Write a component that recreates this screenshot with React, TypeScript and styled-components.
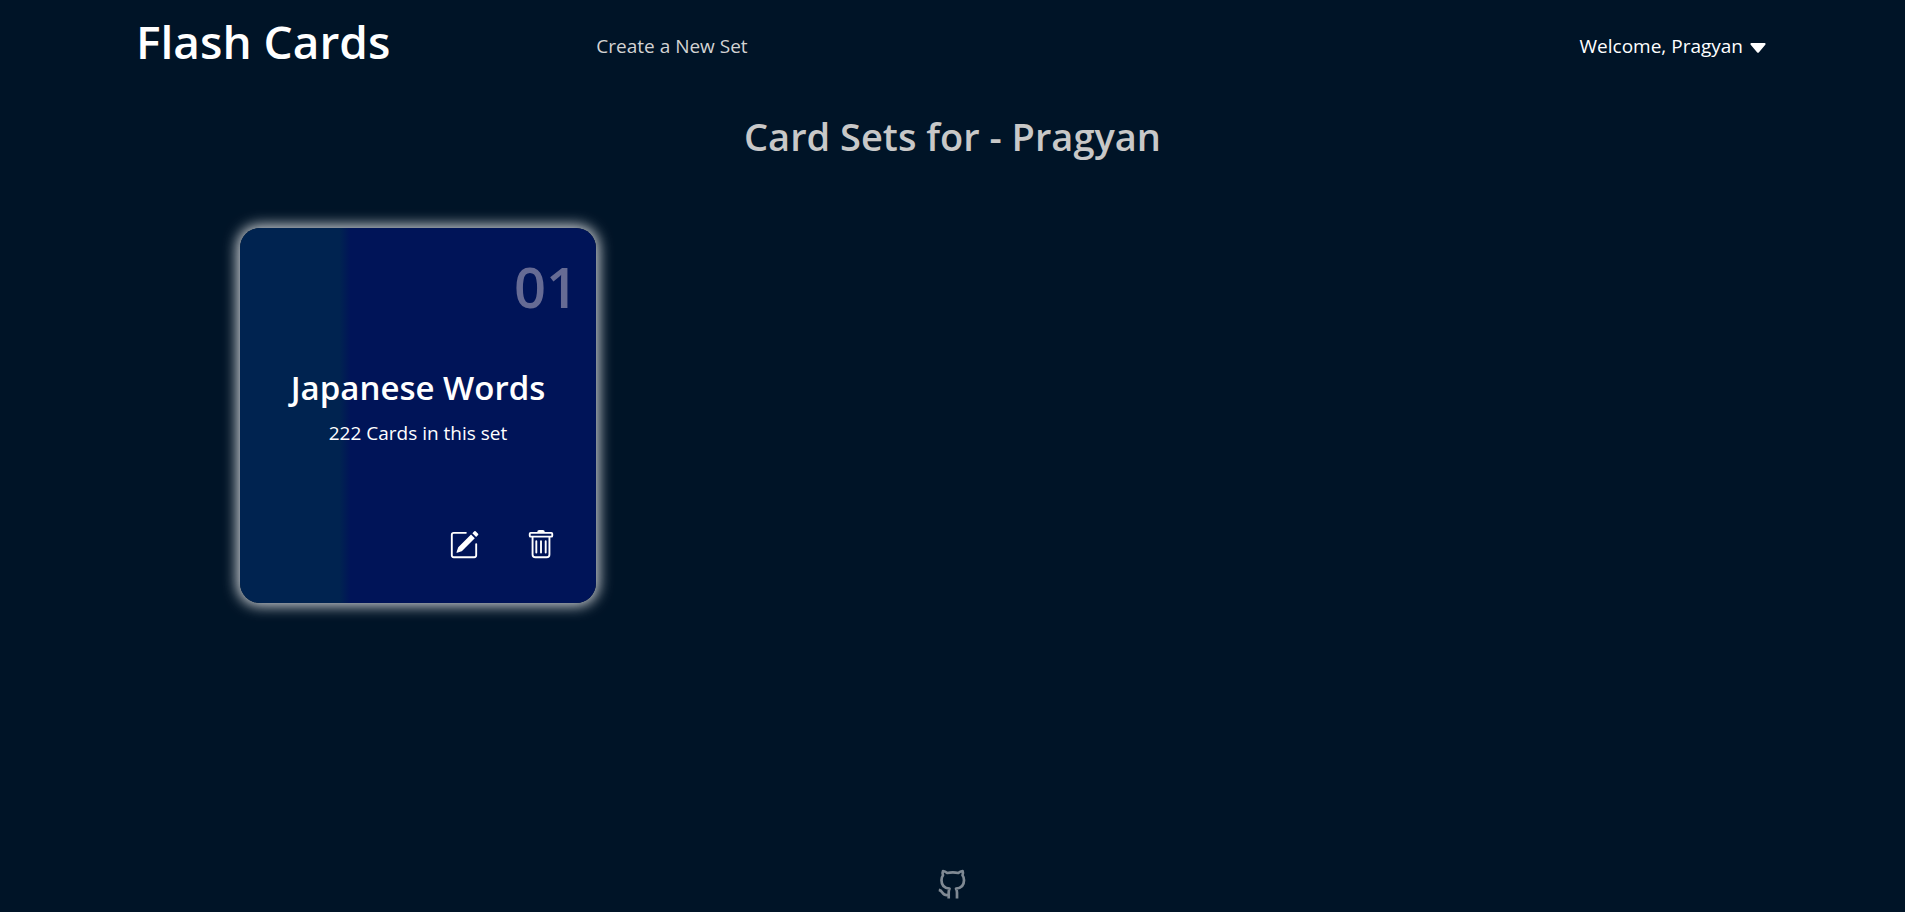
import React from "react";
import styled, { createGlobalStyle } from "styled-components";
import { BsPencilSquare, BsTrash } from "react-icons/bs";

const GlobalStyle = createGlobalStyle`
  *, *::before, *::after { box-sizing: border-box; }
  body {
    margin: 0;
    background: #001427;
    color: #fff;
    font-family: "Segoe UI", "Open Sans", "Noto Sans", sans-serif;
    font-size: 19px;
    line-height: 30px;
  }
`;

const Page = styled.div`
  min-height: 100vh;
  display: flex;
  flex-direction: column;
`;

const Header = styled.header`
  display: flex;
  align-items: center;
  height: 92px;
  padding: 0 139px 0 136px;
`;

const Brand = styled.h1`
  margin: 0 206px 10px 0;
  font-size: 46px;
  font-weight: 600;
  line-height: 60px;
  white-space: nowrap;
`;

const NavLink = styled.a`
  color: #d3d3d3;
  text-decoration: none;
  white-space: nowrap;
`;

const UserMenu = styled.button`
  display: flex;
  align-items: center;
  gap: 7px;
  margin-left: auto;
  padding: 0;
  border: 0;
  background: none;
  color: inherit;
  font: inherit;
  white-space: nowrap;
  cursor: pointer;

  svg {
    margin-top: 3px;
  }
`;

const Main = styled.main`
  flex: 1;
  padding: 14px 240px 0;
`;

const Title = styled.h2`
  margin: 0 0 62px;
  color: #c8c8c8;
  font-size: 38px;
  font-weight: 600;
  line-height: 60px;
  text-align: center;
`;

const CardGrid = styled.div`
  display: grid;
  grid-template-columns: repeat(auto-fill, 356px);
  gap: 60px;
`;

const Card = styled.article`
  display: flex;
  flex-direction: column;
  height: 375px;
  padding: 20px 18px 43px;
  border-radius: 20px;
  background: linear-gradient(to right, #002350 28%, #001458 31%);
  box-shadow: 0 0 14px 3px rgba(255, 255, 255, 0.8);
  text-align: center;
`;

const CardNumber = styled.span`
  color: #666b94;
  font-size: 56px;
  font-weight: 600;
  line-height: 76px;
  text-align: right;
`;

const CardName = styled.h3`
  margin: 42px 0 8px;
  font-size: 33px;
  font-weight: 600;
  line-height: 44px;
  white-space: nowrap;
`;

const CardCount = styled.p`
  margin: 0;
`;

const Actions = styled.div`
  display: flex;
  justify-content: flex-end;
  gap: 47px;
  margin-top: auto;
  padding-right: 22px;
`;

const IconButton = styled.button`
  display: flex;
  padding: 0;
  border: 0;
  background: none;
  color: #fff;
  cursor: pointer;
`;

const Footer = styled.footer`
  display: flex;
  justify-content: center;
  padding-bottom: 12px;
`;

const FooterLink = styled.a`
  display: flex;
  color: #7f8993;
`;

function GithubOutline() {
  return (
    <svg
      width="30"
      height="31"
      viewBox="8 6 30 31"
      fill="none"
      stroke="currentColor"
      strokeWidth="2.7"
      strokeLinejoin="round"
      aria-hidden="true"
    >
      <path d="M18.700 35.500V29.500C18.700 27.800 18.900 26.700 19.500 25.700C14.500 25.300 11.500 22.200 11.500 17.300C11.500 15.300 12 13.500 13 12.200C12.400 10.800 12.400 9.300 13 8C14.700 8.200 16 9 17.200 10C20.700 9.300 24.900 9.300 28.300 10C29.500 9 31 8.200 32.600 8C33.100 9.300 33.100 10.800 32.500 12.200C33.500 13.500 34 15.300 34 17.300C34 22.200 31 25.300 26 25.700C26.700 26.700 27 27.800 27 29.500V35.500" />
      <path d="M18.700 31.800C15.500 32.500 13.900 31.900 12.500 29.700C11.600 28.300 10.500 27.200 8.800 26.900" />
    </svg>
  );
}

const sets = [{ name: "Japanese Words", count: 222 }];

export default function App() {
  return (
    <Page>
      <GlobalStyle />
      <Header>
        <Brand>Flash Cards</Brand>
        <nav>
          <NavLink href="#new">Create a New Set</NavLink>
        </nav>
        <UserMenu type="button" aria-haspopup="menu">
          Welcome, Pragyan
          <svg width="16" height="10" viewBox="0 0 16 10" aria-hidden="true">
            <path d="M1.5 0h13a1 1 0 0 1 .8 1.700l-6.300 7.500a1.300 1.300 0 0 1-2 0L.7 1.700A1 1 0 0 1 1.500 0z" fill="currentColor" />
          </svg>
        </UserMenu>
      </Header>
      <Main>
        <Title>Card Sets for - Pragyan</Title>
        <CardGrid>
          {sets.map((set, index) => (
            <Card key={set.name}>
              <CardNumber>{String(index + 1).padStart(2, "0")}</CardNumber>
              <CardName>{set.name}</CardName>
              <CardCount>{set.count} Cards in this set</CardCount>
              <Actions>
                <IconButton type="button" aria-label="Edit set">
                  <BsPencilSquare size={30} />
                </IconButton>
                <IconButton type="button" aria-label="Delete set">
                  <BsTrash size={30} />
                </IconButton>
              </Actions>
            </Card>
          ))}
        </CardGrid>
      </Main>
      <Footer>
        <FooterLink href="#github" aria-label="GitHub">
          <GithubOutline />
        </FooterLink>
      </Footer>
    </Page>
  );
}
